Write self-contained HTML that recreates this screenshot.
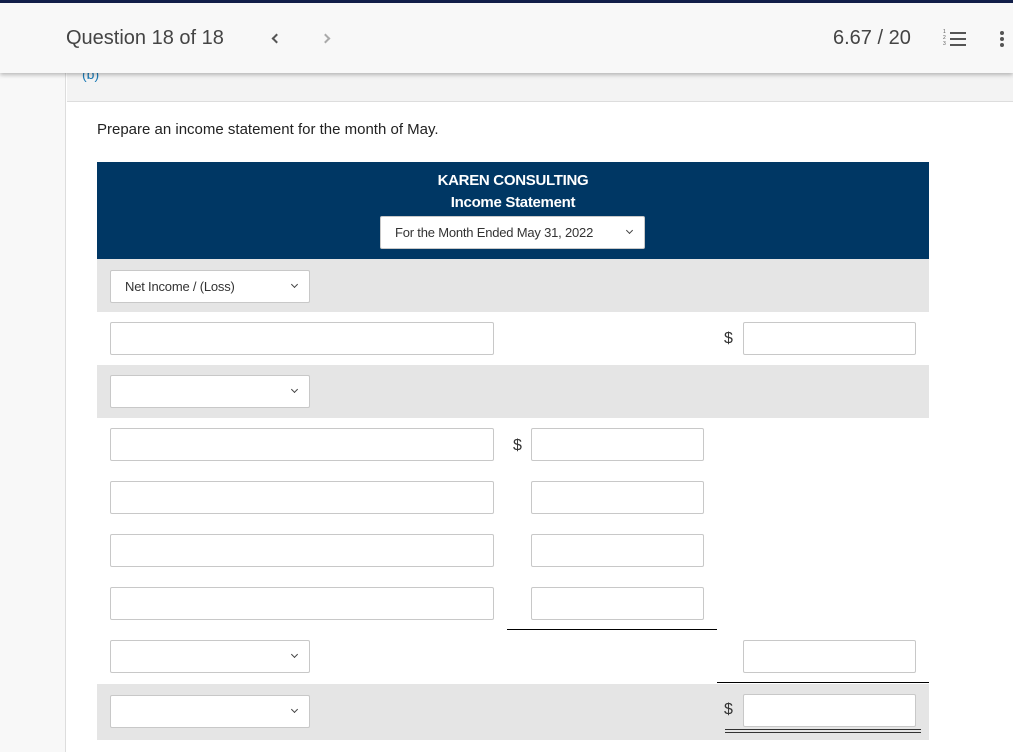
<!DOCTYPE html>
<html><head><style>
body{margin:0;width:1013px;height:752px;overflow:hidden;background:#fff;font-family:"Liberation Sans",sans-serif;position:relative}
div,span{position:absolute;box-sizing:border-box}
.b{background:#fff;border:1px solid #c8c8c8;border-radius:2px;height:33px}
.s{width:200px;font-size:13px;color:#333;padding:8px 0 0 14px;letter-spacing:-.2px}
.s:after{content:"";position:absolute;right:12px;top:11px;width:4px;height:4px;border-right:1.5px solid #444;border-bottom:1.5px solid #444;transform:rotate(45deg)}
.d{font-size:16px;color:#333}
.g{background:#e5e5e5;left:97px;width:832px}
</style></head><body>
<div style="left:0;top:0;width:1013px;height:3px;background:#13204a"></div>
<div style="left:0;top:73px;width:66px;height:679px;background:#f8f8f8;border-right:1px solid #ddd"></div>
<div style="left:67px;top:73px;width:946px;height:29px;background:#f3f3f3;border-bottom:1px solid #ddd"></div>
<span style="left:82px;top:66px;font-size:14px;color:#1a7ab5">(b)</span>
<div style="left:0;top:3px;width:1013px;height:70px;background:#f8f8f8;box-shadow:0 2px 4px rgba(0,0,0,.25)"></div>
<span style="left:66px;top:27px;font-size:20px;color:#444">Question 18 of 18</span>
<div style="left:273px;top:35px;width:7px;height:7px;border-left:2px solid #555;border-bottom:2px solid #555;transform:rotate(45deg)"></div>
<div style="left:322px;top:35px;width:7px;height:7px;border-right:2px solid #aaa;border-top:2px solid #aaa;transform:rotate(45deg)"></div>
<span style="left:833px;top:27px;font-size:20px;color:#444">6.67 / 20</span>
<div style="left:950px;top:32px;width:16px;height:2px;background:#555;box-shadow:0 6px 0 #555,0 12px 0 #555"></div>
<span style="left:943px;top:29px;font-size:5px;line-height:6px;color:#555">1<br>2<br>3</span>
<div style="left:1000px;top:31px;width:4px;height:4px;border-radius:50%;background:#555;box-shadow:0 6px 0 #555,0 12px 0 #555"></div>
<span style="left:97px;top:121px;font-size:15px;color:#222">Prepare an income statement for the month of May.</span>
<div style="left:97px;top:162px;width:832px;height:97px;background:#003764"></div>
<span style="left:97px;top:172px;width:832px;text-align:center;color:#fff;font-weight:bold;font-size:15px;letter-spacing:-.3px">KAREN CONSULTING</span>
<span style="left:97px;top:194px;width:832px;text-align:center;color:#fff;font-weight:bold;font-size:15px;letter-spacing:-.3px">Income Statement</span>
<div class="b s" style="left:380px;top:216px;width:265px;height:33px">For the Month Ended May 31, 2022</div>
<div class="g" style="top:259px;height:53px"></div>
<div class="g" style="top:365px;height:53px"></div>
<div class="g" style="top:684px;height:56px"></div>
<div class="b s" style="left:110px;top:270px">Net Income / (Loss)</div>
<div class="b" style="left:110px;top:322px;width:384px"></div>
<span class="d" style="left:724px;top:330px">$</span>
<div class="b" style="left:743px;top:322px;width:173px"></div>
<div class="b s" style="left:110px;top:375px"></div>
<div class="b" style="left:110px;top:428px;width:384px"></div>
<span class="d" style="left:513px;top:437px">$</span>
<div class="b" style="left:531px;top:428px;width:173px"></div>
<div class="b" style="left:110px;top:481px;width:384px"></div>
<div class="b" style="left:531px;top:481px;width:173px"></div>
<div class="b" style="left:110px;top:534px;width:384px"></div>
<div class="b" style="left:531px;top:534px;width:173px"></div>
<div class="b" style="left:110px;top:587px;width:384px"></div>
<div class="b" style="left:531px;top:587px;width:173px"></div>
<div style="left:507px;top:629px;width:210px;height:1px;background:#000"></div>
<div class="b s" style="left:110px;top:640px"></div>
<div class="b" style="left:743px;top:640px;width:173px"></div>
<div style="left:717px;top:682px;width:212px;height:1px;background:#000"></div>
<div class="b s" style="left:110px;top:695px"></div>
<span class="d" style="left:724px;top:701px">$</span>
<div class="b" style="left:743px;top:694px;width:173px"></div>
<div style="left:725px;top:729px;width:196px;height:4px;border-top:1px solid #333;border-bottom:1px solid #333"></div>
</body></html>
